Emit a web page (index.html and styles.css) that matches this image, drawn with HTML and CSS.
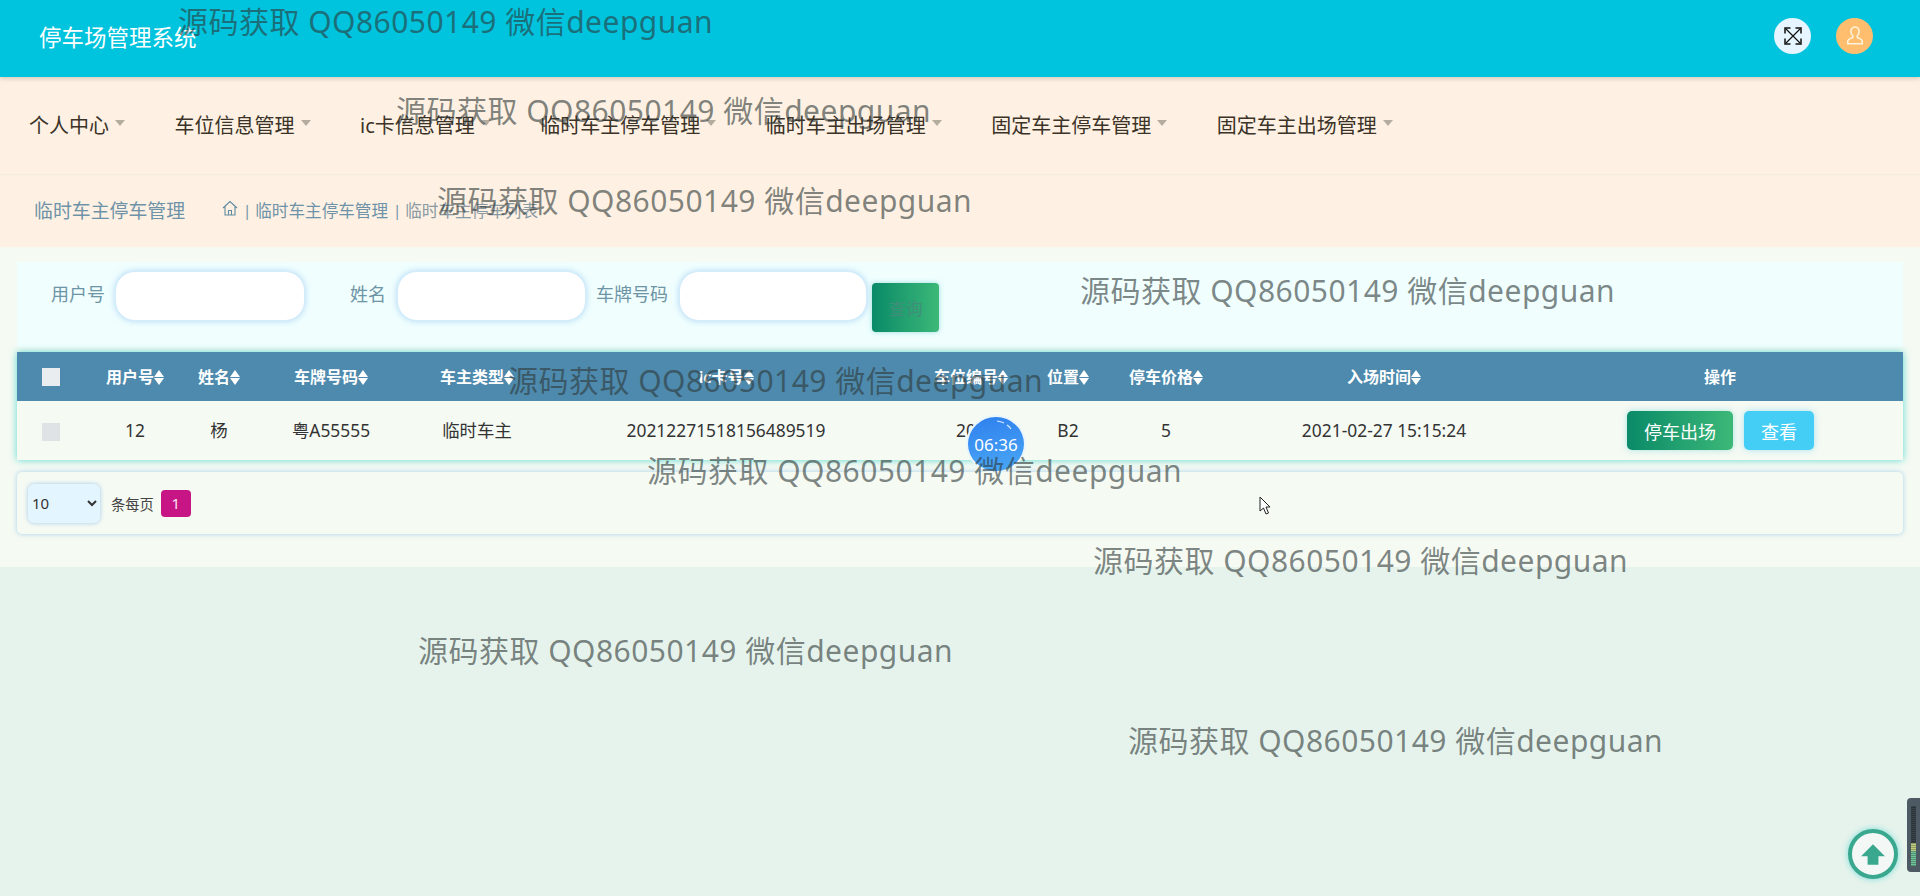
FILE: index.html
```html
<!DOCTYPE html>
<html lang="zh-CN">
<head>
<meta charset="utf-8">
<title>停车场管理系统</title>
<link rel="stylesheet" href="styles.css">
</head>
<body>
<header class="topbar">
  <div class="brand">停车场管理系统</div>
  <div class="top-actions">
    <span class="round-btn round-light">
      <svg viewBox="0 0 20 20" width="20" height="20" fill="none" stroke="#111" stroke-width="1.200"><path d="M3 3l14 14M17 3L3 17"/><path d="M2 7.500V2h5.500M12.500 2H18v5.500M2 12.500V18h5.500M12.500 18H18v-5.500" stroke-width="1.500"/></svg>
    </span>
    <span class="round-btn round-orange">
      <svg viewBox="0 0 20 20" width="24" height="24" fill="none" stroke="#fff3dc" stroke-width="1.300"><path d="M10 2.500c-2.200 0-3.400 1.700-3.400 3.700 0 1.500.6 2.700 1.500 3.500v1.500c-1.500.8-4.100 1.400-4.100 3v2.300h12v-2.300c0-1.600-2.600-2.200-4.100-3V9.700c.9-.8 1.500-2 1.500-3.500 0-2-1.200-3.700-3.400-3.700z"/></svg>
    </span>
  </div>
</header>

<nav class="menu">
  <a class="menu-item">个人中心<i class="caret"></i></a>
  <a class="menu-item">车位信息管理<i class="caret"></i></a>
  <a class="menu-item">ic卡信息管理<i class="caret"></i></a>
  <a class="menu-item">临时车主停车管理<i class="caret"></i></a>
  <a class="menu-item">临时车主出场管理<i class="caret"></i></a>
  <a class="menu-item">固定车主停车管理<i class="caret"></i></a>
  <a class="menu-item">固定车主出场管理<i class="caret"></i></a>
</nav>

<div class="crumbs">
  <span class="crumb-title">临时车主停车管理</span>
  <svg class="crumb-home" viewBox="0 0 16 16" width="16" height="16" fill="none" stroke="#5f8ba3" stroke-width="1.100"><path d="M1 8l7-6.500L15 8M3 6.500V15h10V6.500M6.500 15v-4.500h3V15"/></svg>
  <span class="crumb-sep">|</span>
  <span class="crumb-link">临时车主停车管理</span>
  <span class="crumb-sep">|</span>
  <span class="crumb-current">临时车主停车列表</span>
</div>

<main class="content">
  <form class="search">
    <label class="field-label label-user">用户号</label>
    <input class="field-input input-user" type="text">
    <label class="field-label label-name">姓名</label>
    <input class="field-input input-name" type="text">
    <label class="field-label label-plate">车牌号码</label>
    <input class="field-input input-plate" type="text">
    <button class="query-btn" type="button">查询</button>
  </form>

  <table class="grid">
    <colgroup>
      <col class="c-check"><col class="c-user"><col class="c-name"><col class="c-plate"><col class="c-type"><col class="c-card"><col class="c-slot"><col class="c-pos"><col class="c-price"><col class="c-time"><col class="c-ops">
    </colgroup>
    <thead>
      <tr>
        <th><span class="check check-head"></span></th>
        <th>用户号<i class="sort"></i></th>
        <th>姓名<i class="sort"></i></th>
        <th>车牌号码<i class="sort"></i></th>
        <th>车主类型<i class="sort"></i></th>
        <th>ic卡号<i class="sort"></i></th>
        <th>车位编号<i class="sort"></i></th>
        <th>位置<i class="sort"></i></th>
        <th>停车价格<i class="sort"></i></th>
        <th>入场时间<i class="sort"></i></th>
        <th>操作</th>
      </tr>
    </thead>
    <tbody>
      <tr>
        <td><span class="check"></span></td>
        <td>12</td>
        <td>杨</td>
        <td>粤A55555</td>
        <td>临时车主</td>
        <td>20212271518156489519</td>
        <td>201</td>
        <td>B2</td>
        <td>5</td>
        <td>2021-02-27 15:15:24</td>
        <td class="ops-cell"><button class="btn btn-green" type="button">停车出场</button><button class="btn btn-sky" type="button">查看</button></td>
      </tr>
    </tbody>
  </table>

  <div class="pager">
    <select class="page-size"><option>10</option></select>
    <span class="page-note">条每页</span>
    <span class="page-num">1</span>
  </div>
</main>

<div class="timer">
  <svg class="timer-arc" viewBox="0 0 60 58" width="60" height="58" fill="none" stroke="#d8ecff" stroke-width="1.200"><path d="M31 6c3 .3 5 1 7 2M41 10c1.500 1 3 2.500 4 4"/></svg>
  06:36
</div>

<a class="to-top">
  <svg viewBox="0 0 24 24" width="26" height="26" fill="#3aa88f"><path d="M12 3L23 14h-6v8H7v-8H1z"/></svg>
</a>

<div class="meter"><span class="meter-bars"></span></div>

<svg class="cursor" viewBox="0 0 12 19" width="12" height="19"><path d="M1 1v14l3.500-3 2.500 6 2.500-1-2.500-6H11z" fill="#fff" stroke="#222" stroke-width="1"/></svg>

<div class="wm wm1">源码获取 QQ86050149 微信deepguan</div>
<div class="wm wm2">源码获取 QQ86050149 微信deepguan</div>
<div class="wm wm3">源码获取 QQ86050149 微信deepguan</div>
<div class="wm wm4">源码获取 QQ86050149 微信deepguan</div>
<div class="wm wm5">源码获取 QQ86050149 微信deepguan</div>
<div class="wm wm6">源码获取 QQ86050149 微信deepguan</div>
<div class="wm wm7">源码获取 QQ86050149 微信deepguan</div>
<div class="wm wm8">源码获取 QQ86050149 微信deepguan</div>
<div class="wm wm9">源码获取 QQ86050149 微信deepguan</div>
</body>
</html>
```

FILE: styles.css
```css
* { box-sizing: border-box; }
html, body { margin: 0; height: 896px; overflow: hidden; }
body {
  position: relative;
  background: #e6f3ec;
  font-family: "Noto Sans", "Noto Sans CJK SC", sans-serif;
  color: #333;
}

/* top bar */
.topbar {
  height: 77px;
  background: #00c3dd;
  display: flex;
  align-items: center;
  justify-content: space-between;
  padding: 0 47px 0 39px;
  box-shadow: 0 2px 4px rgba(0, 0, 0, .15);
  position: relative;
}
.brand { color: #fff; font-size: 22.500px; line-height: 1; }
.top-actions { display: flex; gap: 25px; margin-top: -5px; }
.round-btn {
  width: 37px; height: 36px; border-radius: 50%;
  display: flex; align-items: center; justify-content: center;
}
.round-light { background: #e6f5ff; }
.round-orange { background: #ffbe6e; }

/* menu */
.menu {
  height: 98px;
  background: #fef1e3;
  display: flex;
  align-items: center;
  padding: 0 0 2px 29px;
  gap: 49.500px;
  border-bottom: 1px solid #f3ece0;
}
.menu-item { font-size: 20px; color: #3b3328; display: flex; align-items: center; white-space: nowrap; }
.caret {
  width: 0; height: 0; margin-left: 6px; margin-top: -4px;
  border-left: 5.500px solid transparent;
  border-right: 5.500px solid transparent;
  border-top: 6px solid #b5aca0;
}

/* breadcrumb */
.crumbs {
  height: 72px;
  background: #fef1e3;
  display: flex;
  align-items: center;
  padding: 0 0 2px 34px;
  color: #6e93a8;
}
.crumb-title { font-size: 18.900px; width: 188px; white-space: nowrap; }
.crumb-home { margin-top: -4px; }
.crumb-sep { font-size: 15px; margin: 0 4px 0 5px; }
.crumb-link { font-size: 16.600px; white-space: nowrap; }
.crumb-current { font-size: 16.600px; color: #8a9aa3; white-space: nowrap; }

/* content */
.content {
  height: 320px;
  background: #f5faf3;
  padding: 15px 17px 0;
}
.search {
  height: 85px;
  background: #f0fefe;
  display: flex;
  align-items: flex-start;
  padding: 9px 0 0 34px;
}
.field-label { font-size: 18px; color: #6d95a5; line-height: 50px; white-space: nowrap; margin-top: -2px; }
.field-input {
  height: 50px;
  border: 1px solid #d5ecfb;
  border-radius: 20px;
  background: #fff;
  box-shadow: 0 0 6px rgba(130, 190, 240, .6);
  outline: none;
}
.label-user { width: 54px; margin-right: 10px; }
.input-user { width: 190px; margin-right: 45px; }
.label-name { width: 36px; margin-right: 11px; }
.input-name { width: 189px; margin-right: 10px; }
.label-plate { width: 72px; margin-right: 11px; }
.input-plate { width: 188px; margin-right: 5px; }
.query-btn {
  width: 67px; height: 49px; margin-top: 12px;
  border: 0; border-radius: 4px;
  background: linear-gradient(90deg, #0a8a68, #3cb878);
  color: #3f8f7a;
  font-family: inherit; font-size: 17px;
  box-shadow: 0 0 5px rgba(120, 210, 210, .7);
}

.grid {
  width: 1886px;
  margin-top: 5px;
  border-collapse: collapse;
  table-layout: fixed;
  box-shadow: 0 0 7px rgba(60, 210, 200, .85);
  background: #f5faf3;
}
.c-check { width: 68px; } .c-user { width: 100px; } .c-name { width: 68px; }
.c-plate { width: 156px; } .c-type { width: 136px; } .c-card { width: 362px; }
.c-slot { width: 128px; } .c-pos { width: 66px; } .c-price { width: 130px; }
.c-time { width: 306px; } .c-ops { width: 366px; }
.grid th {
  height: 49px; padding: 0 0 2px;
  background: #4d8aad;
  color: #fff;
  font-size: 16px; font-weight: 700;
  text-align: center; white-space: nowrap;
}
.grid td {
  height: 59px; padding: 0 0 2px;
  font-size: 17.400px; color: #333;
  text-align: center; white-space: nowrap;
}
.check { display: inline-block; width: 18px; height: 18px; background: #dfe3e6; vertical-align: middle; }
.check-head { background: #e9edf0; }
.sort {
  display: inline-block; width: 10px; height: 15px; vertical-align: -2px; position: relative;
}
.sort::before, .sort::after {
  content: ""; position: absolute; left: 0;
  border-left: 5px solid transparent; border-right: 5px solid transparent;
}
.sort::before { top: 0; border-bottom: 7px solid #fff; }
.sort::after { bottom: 0; border-top: 7px solid #fff; }

.ops-cell { text-align: left !important; padding-left: 90px !important; }
.btn {
  height: 39px; border: 0; border-radius: 5px;
  color: #fff; font-family: inherit; font-size: 18px;
  vertical-align: middle;
  margin-top: 2px;
}
.btn-green { width: 106px; background: linear-gradient(90deg, #0a8a68, #3cb878); box-shadow: 0 0 6px rgba(120, 210, 210, .6); margin-right: 11px; }
.btn-sky { width: 70px; background: #44cdf5; box-shadow: 0 0 6px rgba(120, 210, 240, .6); }

.pager {
  height: 62px;
  margin-top: 12px;
  background: #f5faf3;
  border-radius: 5px;
  box-shadow: 0 0 5px rgba(130, 190, 230, .7);
  display: flex;
  align-items: center;
  padding-left: 11px;
}
.page-size {
  width: 72px; height: 39px;
  background: #e3f5ff;
  border: 0; border-radius: 6px;
  box-shadow: 0 0 4px rgba(130, 180, 230, .7);
  font-family: inherit; font-size: 15px; color: #333;
  margin-right: 11px;
  outline: none;
}
.page-note { font-size: 14.300px; color: #444; margin-right: 7px; }
.page-num {
  width: 30px; height: 27px;
  background: #c71585;
  border-radius: 4px;
  color: #fde3f2; font-size: 15px;
  display: flex; align-items: center; justify-content: center;
}

/* floating pieces */
.timer {
  position: absolute; left: 966px; top: 415px;
  width: 60px; height: 58px; border-radius: 50%;
  background: linear-gradient(170deg, #2f80ee, #4aa8f5);
  border: 2px solid #eaf6fb;
  color: #fff; font-size: 17px;
  display: flex; align-items: center; justify-content: center;
}
.timer-arc { position: absolute; left: -2px; top: -2px; }
.to-top {
  position: absolute; left: 1848px; top: 829px;
  width: 50px; height: 50px; border-radius: 50%;
  background: #f3f8f6;
  border: 4px solid #3aa88f;
  box-shadow: 0 0 6px rgba(70, 210, 210, .7);
  display: flex; align-items: center; justify-content: center;
}
.meter {
  position: absolute; left: 1907px; top: 798px;
  width: 13px; height: 74px;
  background: #4d5a63;
  border-radius: 4px 0 0 4px;
  display: flex; justify-content: center;
  padding: 8px 0 6px;
}
.meter-bars {
  width: 5px; height: 100%;
  background:
    repeating-linear-gradient(180deg, transparent 0 1px, rgba(0, 0, 0, .25) 1px 2px),
    linear-gradient(180deg, #3a444b 0 62%, #c0d080 62% 75%, #6fc49a 75%);
}
.cursor { position: absolute; left: 1259px; top: 496px; }

.wm {
  position: absolute;
  font-size: 30px;
  letter-spacing: .47px;
  line-height: 44px;
  white-space: nowrap;
  color: rgba(45, 55, 55, .6);
  pointer-events: none;
}
.wm1 { left: 178px; top: 0; }
.wm2 { left: 396px; top: 89px; }
.wm3 { left: 437px; top: 179px; }
.wm4 { left: 1080px; top: 269px; }
.wm5 { left: 508px; top: 359px; }
.wm6 { left: 647px; top: 449px; }
.wm7 { left: 1093px; top: 539px; }
.wm8 { left: 418px; top: 629px; }
.wm9 { left: 1128px; top: 719px; }
```
